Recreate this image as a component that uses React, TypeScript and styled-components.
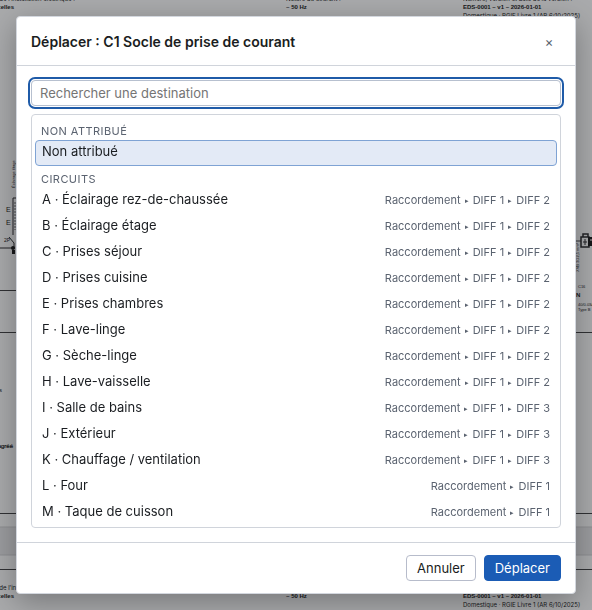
import React, { useState } from "react";
import styled, { createGlobalStyle } from "styled-components";

const GlobalStyle = createGlobalStyle`
  *, *::before, *::after { box-sizing: border-box; }
  body {
    margin: 0;
    background: #a9aaac;
    color: #1a1d21;
    font: 13px/20px Inter, "Liberation Sans", sans-serif;
  }
  button, input { font: inherit; color: inherit; }
`;

const Backdrop = styled.div`
  position: relative;
  display: flex;
  align-items: center;
  justify-content: center;
  height: 100vh;
  padding: 16px;
  overflow: hidden;
`;

const Sheet = styled.svg`
  position: absolute;
  inset: 0;
  width: 100%;
  height: 100%;
  font-family: "Liberation Sans", sans-serif;
  fill: #17181a;
`;

const Dialog = styled.section`
  position: relative;
  display: flex;
  flex-direction: column;
  width: 100%;
  max-width: 560px;
  height: 100%;
  max-height: 640px;
  background: #fff;
  border: 1px solid #d3d7de;
  border-radius: 4px;
  box-shadow: 0 8px 30px rgba(0, 0, 0, 0.3);
`;

const Header = styled.header`
  display: flex;
  align-items: center;
  justify-content: space-between;
  padding: 13px 14px 11px;
  border-bottom: 1px solid #d0d4db;
`;

const Title = styled.h2`
  margin: 0;
  font-size: 14px;
  line-height: 24px;
  font-weight: 600;
`;

const CloseButton = styled.button`
  width: 24px;
  height: 24px;
  padding: 0;
  border: 0;
  background: none;
  color: #59616e;
  cursor: pointer;
`;

const Body = styled.div`
  display: flex;
  flex-direction: column;
  flex: 1;
  gap: 8px;
  min-height: 0;
  padding: 14px;
`;

const Search = styled.input`
  flex: none;
  width: 100%;
  height: 26px;
  padding: 0 8px;
  border: 1px solid #b7c0cf;
  border-radius: 4px;
  background: #fff;
  &::placeholder { color: #757575; opacity: 1; }
  &:focus { outline: 2px solid #1f5ba8; outline-offset: 1px; }
`;

const List = styled.div`
  flex: 1;
  min-height: 0;
  padding: 3px;
  overflow-y: auto;
  scrollbar-width: none;
  border: 1px solid #d0d4db;
  border-radius: 4px;
`;

const GroupLabel = styled.div`
  padding: 5px 6px 1px;
  font-size: 11px;
  line-height: 16px;
  letter-spacing: 0.04em;
  text-transform: uppercase;
  color: #5b6370;
`;

const Option = styled.button<{ $selected: boolean }>`
  display: flex;
  align-items: baseline;
  justify-content: space-between;
  width: 100%;
  height: 26px;
  padding: 0 6px 2px;
  border: 1px solid ${(p) => (p.$selected ? "#7fa3d4" : "transparent")};
  border-radius: 4px;
  background: ${(p) => (p.$selected ? "#e3eaf6" : "transparent")};
  text-align: left;
  cursor: pointer;
`;

const Path = styled.span`
  font-size: 11px;
  color: #5b6370;
`;

const Arrow = styled.span`
  display: inline-block;
  width: 6px;
  font-size: 7px;
  line-height: 11px;
  text-align: center;
  vertical-align: 1px;
`;

const Footer = styled.footer`
  display: flex;
  justify-content: flex-end;
  gap: 8px;
  padding: 12px 14px;
  border-top: 1px solid #d0d4db;
`;

const ActionButton = styled.button<{ $primary?: boolean }>`
  height: 26px;
  padding: 0 10px;
  border: 1px solid ${(p) => (p.$primary ? "#1b5cb5" : "#b7bccb")};
  border-radius: 4px;
  background: ${(p) => (p.$primary ? "#1b5cb5" : "#fff")};
  color: ${(p) => (p.$primary ? "#fff" : "#1a1d21")};
  cursor: pointer;
`;

const circuits: [string, string, string[]][] = [
  ["A", "Éclairage rez-de-chaussée", ["DIFF 1", "DIFF 2"]],
  ["B", "Éclairage étage", ["DIFF 1", "DIFF 2"]],
  ["C", "Prises séjour", ["DIFF 1", "DIFF 2"]],
  ["D", "Prises cuisine", ["DIFF 1", "DIFF 2"]],
  ["E", "Prises chambres", ["DIFF 1", "DIFF 2"]],
  ["F", "Lave-linge", ["DIFF 1", "DIFF 2"]],
  ["G", "Sèche-linge", ["DIFF 1", "DIFF 2"]],
  ["H", "Lave-vaisselle", ["DIFF 1", "DIFF 2"]],
  ["I", "Salle de bains", ["DIFF 1", "DIFF 3"]],
  ["J", "Extérieur", ["DIFF 1", "DIFF 3"]],
  ["K", "Chauffage / ventilation", ["DIFF 1", "DIFF 3"]],
  ["L", "Four", ["DIFF 1"]],
  ["M", "Taque de cuisson", ["DIFF 1"]],
];

function TitleBlock({ y }: { y: number }) {
  return (
    <g fontSize="6">
      <g fontFamily="Inter">
        <text x="75" y={y - 8} textAnchor="end">de l’installation électrique :</text>
        <text x="286" y={y - 8}>Nature du courant :</text>
        <text x="463" y={y - 8}>Numéro, version et date de la version :</text>
        <text x="463" y={y + 9}>Domestique · RGIE Livre 1 (AR 6/10/2025)</text>
      </g>
      <text x="14" y={y} textAnchor="end" fontWeight="700">Bruxelles</text>
      <text x="286" y={y} fontWeight="700">~ 50 Hz</text>
      <text x="463" y={y} fontWeight="700">EDS-0001 – v1 – 2026-01-01</text>
    </g>
  );
}

function SchematicSheet() {
  return (
    <Sheet viewBox="0 0 592 610" preserveAspectRatio="xMidYMid slice" aria-hidden="true">
      <path d="M0 527h592v28H0z" fill="#9b9c9f" />
      <path d="M0 527h592M0 555h592" stroke="#8d8e91" />
      <path d="M0 290.500h16M0 332.500h592M0 513.500h592M0 569.500h592" stroke="#303134" />
      <path d="M0 248h15" stroke="#222326" />
      <TitleBlock y={9} />
      <TitleBlock y={598} />
      <text transform="translate(15 188) rotate(-90)" fontSize="4">Éclairage étage</text>
      <text x="6" y="212" fontSize="7">E</text>
      <text x="6" y="225" fontSize="7">E</text>
      <path d="M16 198h-3v37M9 237l5 6v6" fill="none" stroke="#222326" />
      <path d="M15 202v28" stroke="#45474b" strokeDasharray="2 1" />
      <text x="4" y="242" fontSize="5">2P</text>
      <circle cx="13" cy="248" r="2" />
      <path d="M12 250h3v4h-3z" />
      <text x="13" y="448" textAnchor="end" fontSize="6" stroke="#17181a" strokeWidth="0.200">agréé</text>
      <text x="2" y="392" textAnchor="end" fontSize="6">ns</text>
      <path d="M576 241h5" stroke="#303134" />
      <path d="M581 237h8v10h-8zM583 234h5v3h-5z" fill="none" stroke="#222326" strokeWidth="1.500" />
      <path d="M583 242h4M585 239v6" stroke="#222326" />
      <path d="M588 237h4v9h-4z" />
      <path d="M590 240h2" stroke="#a9aaac" />
      <text transform="translate(579 272) rotate(-90)" fontSize="4">XVB 3G2,5 mm²</text>
      <text x="578" y="288" fontSize="4">C16</text>
      <text x="576" y="297" fontSize="6" fontWeight="700">N</text>
      <text x="578" y="306" fontSize="4">40/0.03A</text>
      <text x="578" y="311" fontSize="4">Type B</text>
    </Sheet>
  );
}

export default function App() {
  const [selected, setSelected] = useState("none");
  return (
    <Backdrop>
      <GlobalStyle />
      <SchematicSheet />
      <Dialog role="dialog" aria-modal="true" aria-labelledby="move-title">
        <Header>
          <Title id="move-title">Déplacer : C1 Socle de prise de courant</Title>
          <CloseButton aria-label="Fermer">×</CloseButton>
        </Header>
        <Body>
          <Search autoFocus aria-label="Rechercher une destination" placeholder="Rechercher une destination" />
          <List role="listbox" aria-label="Destinations">
            <GroupLabel>Non attribué</GroupLabel>
            <Option role="option" aria-selected={selected === "none"} $selected={selected === "none"} onClick={() => setSelected("none")}>
              Non attribué
            </Option>
            <GroupLabel>Circuits</GroupLabel>
            {circuits.map(([id, name, path]) => (
              <Option key={id} role="option" aria-selected={selected === id} $selected={selected === id} onClick={() => setSelected(id)}>
                <span>{`${id} · ${name}`}</span>
                <Path>
                  Raccordement
                  {path.map((step) => (
                    <React.Fragment key={step}>
                      {" "}
                      <Arrow>▸</Arrow> {step}
                    </React.Fragment>
                  ))}
                </Path>
              </Option>
            ))}
          </List>
        </Body>
        <Footer>
          <ActionButton>Annuler</ActionButton>
          <ActionButton $primary>Déplacer</ActionButton>
        </Footer>
      </Dialog>
    </Backdrop>
  );
}
